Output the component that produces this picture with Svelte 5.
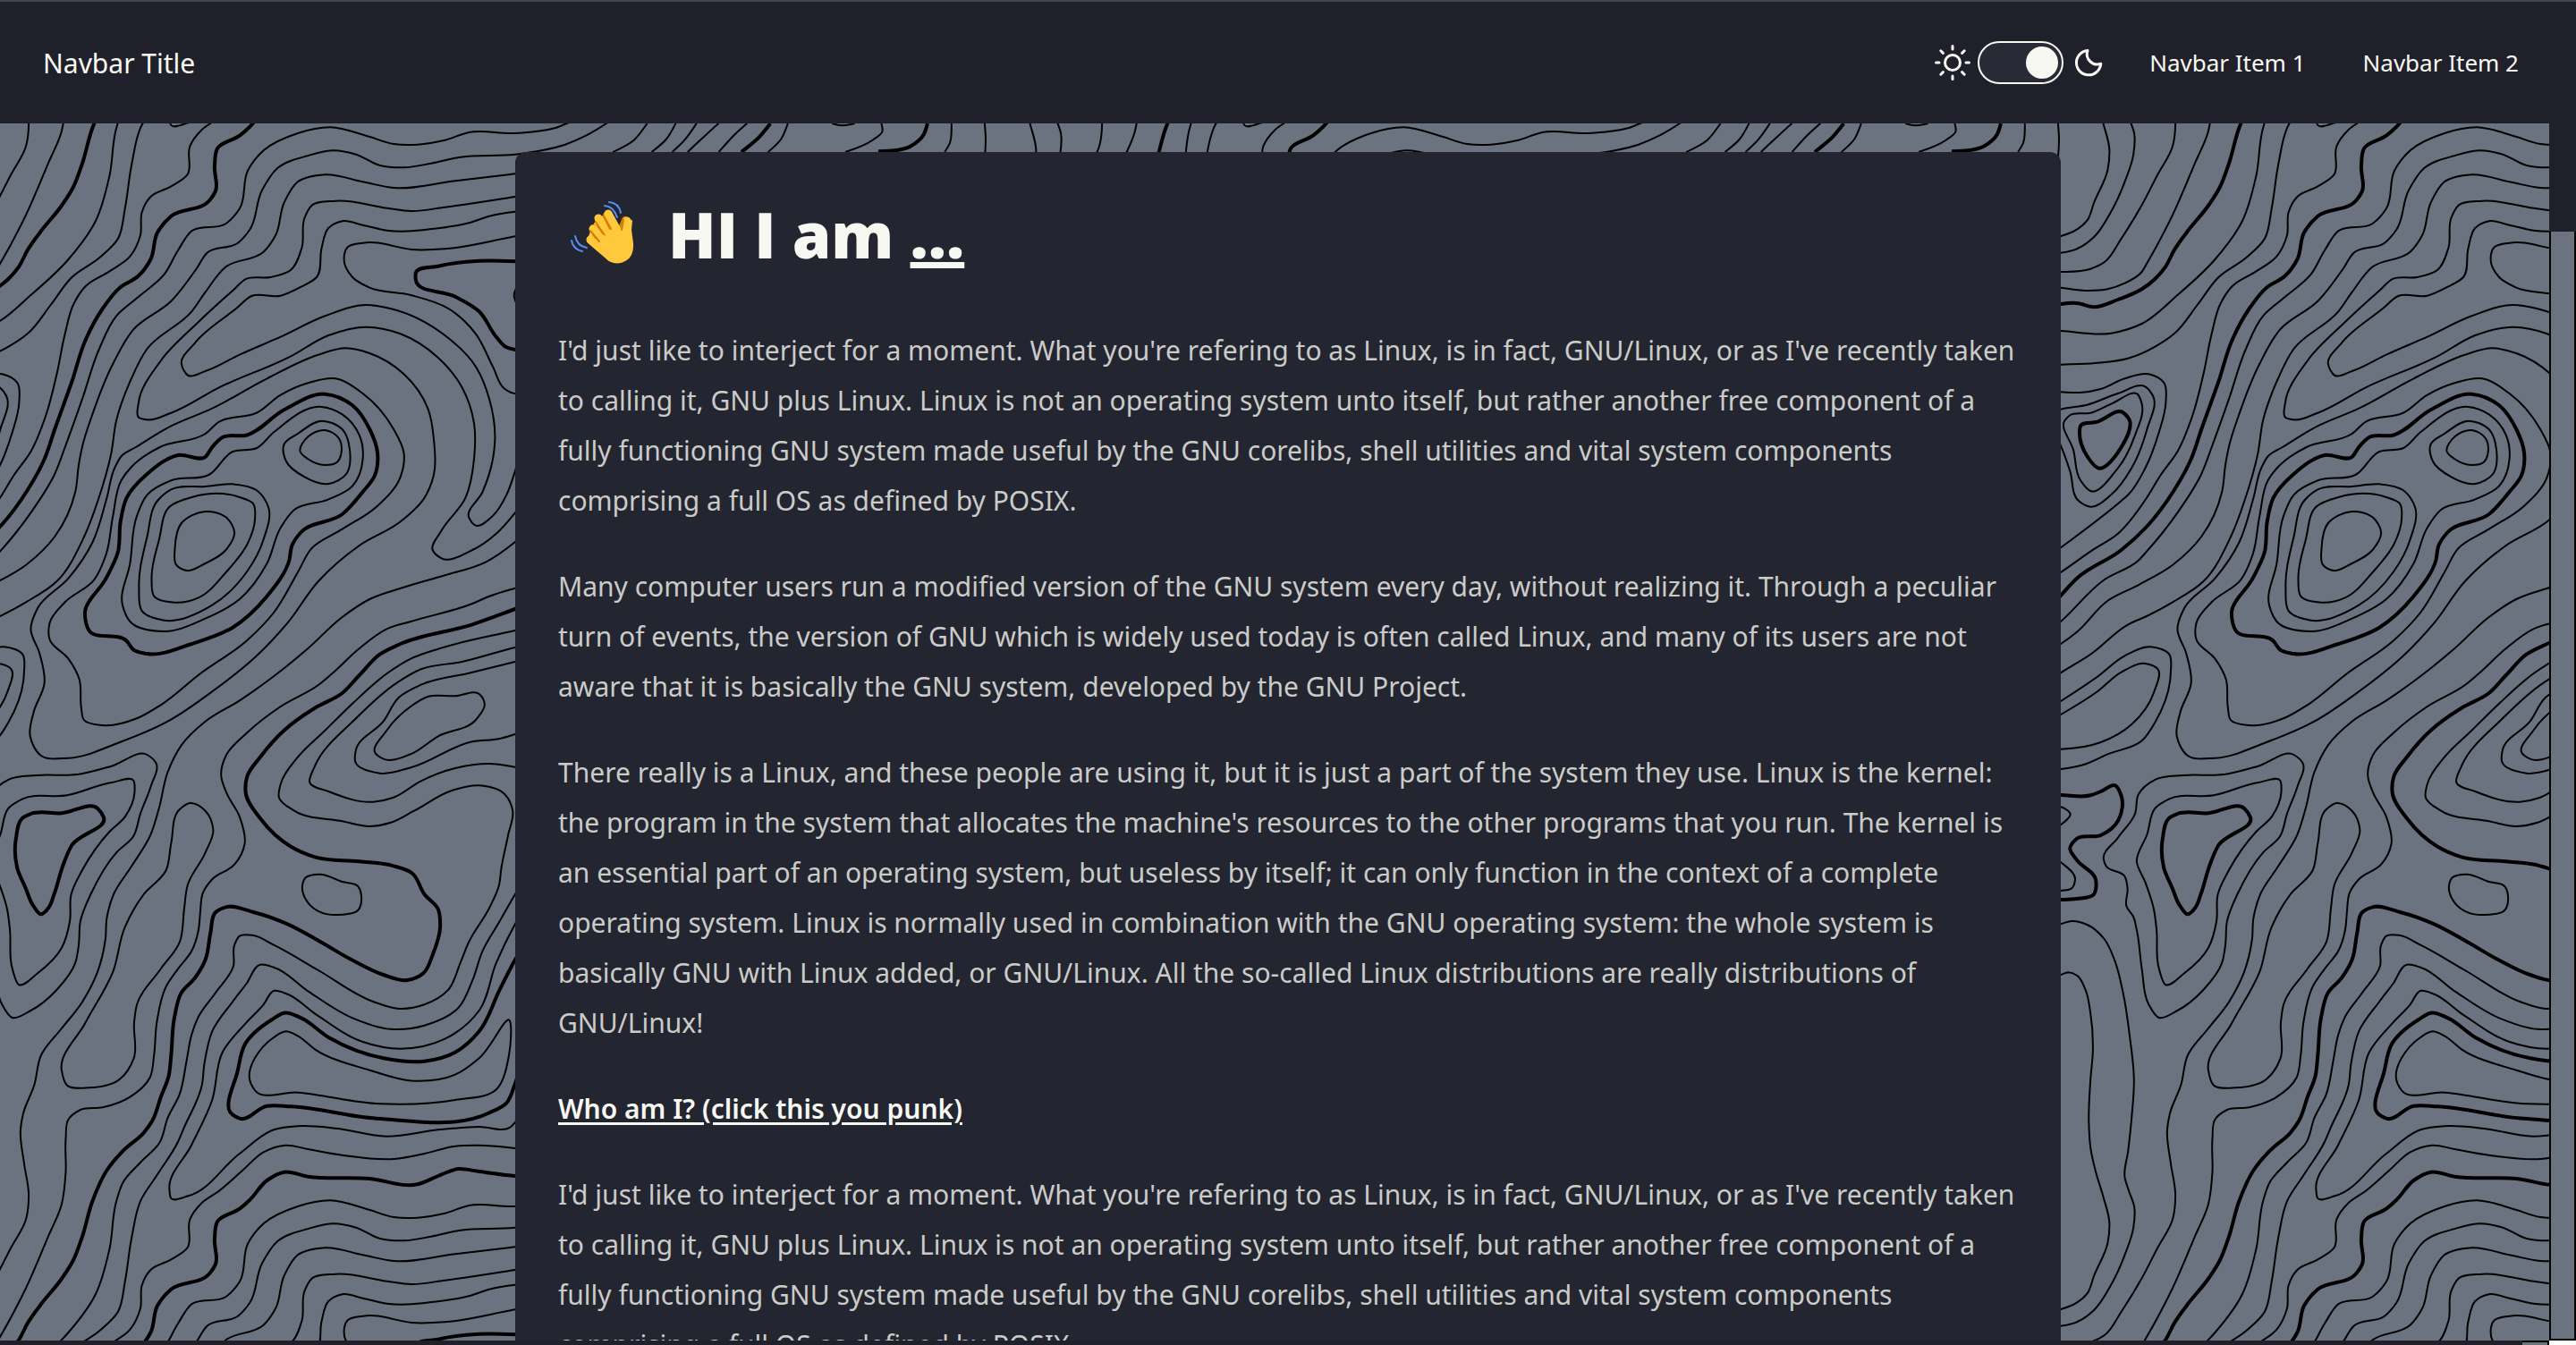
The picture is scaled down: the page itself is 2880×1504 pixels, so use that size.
<script>
  let dark = $state(true);

  const intro =
    "I'd just like to interject for a moment. What you're refering to as Linux, is in fact, GNU/Linux, or as I've recently taken to calling it, GNU plus Linux. Linux is not an operating system unto itself, but rather another free component of a fully functioning GNU system made useful by the GNU corelibs, shell utilities and vital system components comprising a full OS as defined by POSIX.";
  const users =
    'Many computer users run a modified version of the GNU system every day, without realizing it. Through a peculiar turn of events, the version of GNU which is widely used today is often called Linux, and many of its users are not aware that it is basically the GNU system, developed by the GNU Project.';
  const kernel =
    "There really is a Linux, and these people are using it, but it is just a part of the system they use. Linux is the kernel: the program in the system that allocates the machine's resources to the other programs that you run. The kernel is an essential part of an operating system, but useless by itself; it can only function in the context of a complete operating system. Linux is normally used in combination with the GNU operating system: the whole system is basically GNU with Linux added, or GNU/Linux. All the so-called Linux distributions are really distributions of GNU/Linux!";

  // Survey points of the topographic pattern. The grid is finer than a pixel:
  // one step is GRID_X pixels across and GRID_Y pixels down.
  const GRID_X = 600 / 1568;
  const GRID_Y = 1 / 3;
  const TILE = 1200;
  const NAV = 138;

  const thinOpen = [
    '-260,400 -256,470 -259,530',
    '-300,3290 -251,3270 -229,3262 -204,3272 -179,3320 -164,3400 -157,3520 -164,3620 -169,3760 -164,3850 -149,3930 -127,4014 -109,4100 -114,4170 -154,4280 -174,4340 -204,4370 -251,4392 -320,4400',
    '-300,3125 -251,3100 -219,3090 -174,3102 -124,3150 -94,3220 -69,3330 -49,3480 -37,3620 -44,3750 -54,3860 -64,3950 -52,3995 -36,4050 -39,4120 -64,4210 -104,4310 -154,4395 -204,4435 -251,4448 -320,4450',
    '1560,1760 1505,1818 1420,1885 1300,1930 1180,1970 1080,2010 1000,2070 900,2175 810,2260 700,2350 600,2420 530,2500 490,2590 465,2710 440,2800 385,2905 332,3000 312,3080 308,3150 285,3260 240,3362 180,3450 120,3540 100,3640 68,3735 60,3790 70,3900 84,4010 76,4090 30,4190 -14,4288 -74,4400 -124,4480 -164,4502 -251,4512 -320,4510',
    '1560,1955 1505,1973 1430,2000 1380,2025 1200,2085 1130,2110 1050,2175 970,2260 930,2298 820,2370 720,2460 660,2535 646,2600 662,2660 700,2740 715,2830 685,2900 620,2950 593,2995 585,3060 580,3120 560,3190 520,3250 485,3310 458,3430 450,3540 438,3615 380,3680 300,3715 235,3723 200,3755 192,3820 192,3930 180,4040 140,4150 72,4330 0,4485 -14,4512 -64,4550 -114,4570 -169,4575 -251,4565 -320,4555',
    '1560,2100 1505,2115 1280,2177 1200,2210 1130,2260 1030,2360 950,2450 870,2540 820,2630 815,2675 860,2720 1000,2755 1080,2772 1140,2760 1210,2720 1320,2652 1400,2635 1475,2665 1498,2720 1485,2800 1465,2910 1458,2970 1430,3045 1370,3160 1345,3230 1310,3320 1240,3370 1160,3383 1090,3360 930,3255 800,3170 740,3138 700,3140 685,3170 682,3240 630,3330 580,3410 560,3470 545,3560 525,3670 490,3750 467,3832 410,3900 360,3965 340,4030 320,4190 280,4340 200,4470 90,4590 -14,4686 -104,4718 -251,4710 -320,4705',
    '1560,2900 1505,3000 1460,3090 1410,3190 1380,3290 1340,3380 1240,3440 1140,3452 1030,3415 900,3325 800,3245 760,3236 720,3300 680,3360 620,3460 597,3570 590,3640 535,3790 520,3830 460,3940 410,4030 385,4150 365,4300 345,4400 290,4465 210,4530 150,4620 80,4720 26,4762 -54,4802 -150,4818 -251,4823 -320,4825',
    '1560,3860 1505,3852 1400,3842 1330,3845 1240,3870 1150,3888 1000,3875 900,3855 835,3842 770,3865 710,3925 640,3995 590,4035 555,4090 548,4185 500,4225 440,4260 415,4310 410,4390 380,4460 320,4510 250,4560 215,4620 190,4720 165,4860 135,4990 90,5115 40,5195 0,5270 -84,5390 -164,5450 -251,5520 -320,5570',
    '1700,395 1656,414 1625,428 1560,442 1500,447 1370,444 1300,470 1220,485 1150,483 1070,455 965,427 870,447 770,505 725,570 700,700 660,750 560,775 520,840 480,920 400,1000 340,1060 290,1170 240,1340 190,1500 160,1590 90,1720 0,1850 -24,1880 -124,1945 -251,2085 -320,2150',
    '1820,375 1772,414 1712,455 1651,485 1582,505 1505,518 1340,528 1260,548 1180,562 1110,555 1040,518 975,505 900,522 810,565 765,640 730,770 695,815 605,848 575,900 500,1010 390,1105 330,1220 270,1390 240,1500 230,1560 220,1650 160,1800 76,1895 -20,1960 -114,2015 -204,2120 -251,2160 -310,2200',
    '1891,414 1852,470 1791,510',
    '1974,414 1948,465 1904,510',
    '2035,414 2000,470 1964,510',
    '2100,414 2060,455 2009,510',
    '2183,414 2148,450 2100,510',
    '2302,414 2283,465 2244,510',
    '2431,414 2462,421 2497,414',
    '2575,414 2578,440 2549,470 2470,510',
    '2780,414 2775,480 2760,510',
    '1560,575 1505,583 1330,607 1150,630 1060,610 950,586 870,610 830,680 805,790 770,845 660,895 600,980 560,1045 430,1170 380,1280 340,1410 325,1520 286,1680 246,1800 166,1950 76,2020 0,2067 -54,2095 -164,2195 -251,2257 -320,2310',
    '1560,650 1505,660 1300,695 1200,708 1130,698 980,674 910,690 890,730 882,830 850,905 790,930 720,935 680,975 580,1080 470,1210 405,1350 405,1400 430,1408 500,1385 640,1300 850,1195 960,1125 1070,1097 1170,1120 1280,1200 1350,1300 1385,1420 1385,1540 1360,1670 1290,1780 1264,1845 1290,1873 1380,1845 1450,1790 1505,1720 1560,1630',
    '1560,705 1505,710 1430,725 1370,748 1280,766 1130,773 1060,755 1000,742 960,765 940,830 925,930 880,962 820,992 735,993 690,1035 570,1150 530,1220 550,1260 600,1245 700,1190 820,1130 950,1060 1070,1023 1140,1035 1300,1125 1390,1230 1430,1340 1446,1480 1440,1540 1410,1650 1370,1735 1390,1763 1440,1730 1480,1660 1505,1580 1520,1520',
    '1560,782 1505,793 1300,835 1215,838 1060,815 1015,830 1005,870 1030,930 1080,965 1200,990 1310,1035 1390,1120 1440,1230 1475,1305 1505,1320 1530,1310',
    '1512,958 1502,990 1512,1025',
    '-320,1312 -251,1315 -194,1317 -134,1305 -64,1270 6,1255 51,1285 56,1350 36,1450 -4,1570 -54,1660 -74,1680 -251,1837 -320,1895',
    '-290,1388 -251,1373 -174,1358 -84,1320 -4,1297 19,1330 1,1440 -44,1570 -104,1660 -164,1700 -199,1680 -224,1580 -251,1495 -290,1400',
    '-320,2400 -251,2352 -144,2270 -64,2200 11,2170 66,2195 70,2260 26,2420 -14,2485 -114,2530 -184,2565 -251,2580 -320,2585',
    '-320,2440 -251,2397 -144,2320 -74,2255 -4,2226 33,2245 22,2320 -44,2430 -134,2490 -251,2513 -320,2510',
    '-270,2705 -251,2707 -223,2730 -251,2767 -280,2785',
    '-290,2860 -251,2892 -209,2950 -219,2980 -251,2988 -300,2995',
    '1560,2158 1505,2172 1350,2220 1230,2245 1160,2290 1040,2410 920,2570 905,2625 960,2655 1090,2690 1150,2675 1230,2620 1330,2577 1430,2562 1505,2573 1560,2585',
    '1560,2205 1505,2220 1370,2258 1230,2297 1165,2340 1120,2420 1040,2515 1038,2555 1110,2594 1200,2575 1380,2488 1460,2478 1505,2463 1560,2440',
    '1540,3030 1505,3100 1450,3230 1400,3390 1300,3485 1170,3518 1060,3495 920,3400 840,3335 800,3324 770,3370 720,3430 650,3530 620,3690 560,3840 495,3990 500,4020 550,4012 700,3870 800,3790 870,3778 980,3785 1130,3812 1280,3790 1400,3780 1490,3782 1515,3750'
  ];

  const thinClosed = [
    '397,1500 490,1435 620,1370 780,1270 930,1190 1010,1168 1080,1185 1180,1255 1250,1370 1268,1480 1266,1600 1240,1670 1170,1750 1050,1830 930,1950 840,2090 750,2200 620,2320 490,2420 350,2490 200,2543 120,2535 88,2470 98,2390 130,2290 115,2190 90,2110 110,2040 200,1940 270,1820 312,1670 335,1570 355,1530',
    '467,1500 600,1455 640,1415 750,1385 820,1325 900,1285 980,1270 1060,1320 1150,1440 1180,1520 1170,1600 1100,1700 1000,1775 910,1840 870,1920 800,2055 720,2150 585,2260 470,2365 400,2410 300,2433 245,2415 237,2370 232,2280 200,2210 145,2145 145,2090 190,2020 275,1945 310,1860 330,1730 355,1610 385,1565',
    '800,1450 940,1365 1000,1390 1050,1460 1060,1540 1030,1630 960,1675 860,1710 820,1770 780,1890 700,2010 600,2075 480,2118 380,2085 358,2030 380,1890 400,1730 430,1660 500,1612 610,1593 680,1515 750,1503',
    '830,1490 870,1455 940,1412 1000,1440 1022,1510 1012,1590 960,1623 890,1600 835,1545',
    '950,1443 990,1470 998,1510 985,1550 950,1560 900,1540 877,1515 900,1465',
    '500,1642 600,1632 680,1624 750,1645 785,1705 770,1810 720,1920 620,2030 480,2081 415,2050 406,1970 430,1800 460,1680',
    '560,1668 700,1668 740,1690 745,1740 725,1820 660,1920 580,2005 510,2021 450,2000 443,1940 465,1810 495,1700',
    '600,1716 660,1735 685,1785 660,1845 600,1890 545,1914 515,1895 511,1840 530,1755',
    '-239,1410 -224,1393 -164,1385 -104,1355 -26,1323 -14,1355 -34,1460 -84,1570 -164,1647 -194,1610 -214,1510',
    '456,2560 430,2532 326,2570 226,2598 106,2601 26,2615 -24,2665 -34,2730 -84,2810 -126,2880 -119,2905 -64,2940 -56,2980 -59,3040 -39,3075 -29,3120 -14,3250 6,3370 36,3414 90,3390 166,3320 220,3230 230,3170 235,3090 265,3000 340,2860 390,2805 410,2730 440,2640',
    '390,2618 326,2625 196,2668 66,2680 26,2710 1,2800 -29,2890 -4,2960 21,3050 29,3120 36,3250 56,3304 110,3265 180,3180 204,3090 208,3000 240,2920 320,2790 365,2740 393,2660',
    '555,2694 600,2720 623,2785 600,2860 548,2970 538,3050 525,3160 470,3250 400,3370 392,3430 391,3550 350,3620 260,3649 195,3640 180,3590 250,3430 330,3260 365,3110 420,3000 485,2920 500,2830 525,2715',
    '892,2945 935,2933 1000,2958 1045,2972 1056,3010 1045,3055 1000,3068 940,3062 895,3020 883,2975',
    '1250,2337 1330,2335 1400,2328 1416,2360 1390,2415 1280,2470 1200,2530 1120,2546 1096,2525 1130,2450 1200,2370',
    '1488,3422 1487,3540 1450,3655 1330,3690 1110,3703 870,3665 745,3658 733,3635 800,3480 835,3460 870,3475 920,3520 1080,3590 1210,3626 1330,3605 1400,3550'
  ];

  const thickOpen = [
    '1560,2020 1505,2043 1380,2095 1170,2160 1110,2195 1050,2265 1000,2325 920,2375 830,2450 760,2540 722,2605 718,2660 760,2745 850,2840 920,2875 1050,2890 1150,2905 1205,2930 1240,3000 1280,3050 1286,3110 1265,3200 1237,3265 1190,3288 1120,3270 1020,3215 930,3155 840,3100 740,3060 660,3043 630,3060 615,3130 600,3220 570,3280 530,3330 510,3410 500,3540 493,3610 470,3680 445,3760 420,3800 360,3860 310,3930 270,4030 240,4150 213,4230 180,4290 120,4375 80,4440 55,4495 25,4535 -14,4570 -84,4605 -154,4630 -204,4617 -251,4620 -320,4640',
    '1560,3945 1505,3945 1400,3930 1335,3922 1280,3945 1220,3973 1080,3954 900,3947 830,3932 780,3960 730,4025 700,4055 635,4098 627,4160 630,4240 610,4275 500,4325 460,4380 440,4470 405,4525 350,4565 300,4635 250,4740 210,4880 160,5040 130,5140 80,5245 0,5367 -74,5445 -204,5540 -251,5598 -310,5680',
    '2251,414 2218,460 2166,510',
    '2710,414 2697,455 2662,490 2566,508',
    '1560,882 1505,877 1400,875 1280,893 1215,915 1215,940 1330,995 1400,1045 1450,1130 1480,1165 1505,1173 1540,1180',
    '-320,2665 -251,2667 -164,2668 -134,2655 -92,2635 -74,2670 -82,2750 -134,2802 -204,2813 -224,2845 -204,2885 -149,2950 -154,3000 -204,3015 -251,3018 -320,3018',
    '1560,3120 1505,3220 1460,3320 1400,3460 1330,3530 1240,3560 1120,3550 960,3480 880,3415 830,3398 795,3420 715,3505 695,3590 680,3740 700,3752 780,3710 850,3712 1100,3752 1430,3733 1480,3700 1505,3635 1525,3560'
  ];

  const thickClosed = [
    '620,1500 650,1467 720,1460 830,1375 950,1322 1030,1360 1080,1440 1103,1520 1095,1595 1060,1650 1000,1725 880,1785 853,1830 845,1880 780,2000 680,2105 560,2160 430,2193 390,2180 370,2150 260,2115 248,2060 310,1940 345,1850 352,1750 370,1670 430,1590 520,1527 600,1533',
    '-194,1430 -144,1415 -70,1383 -52,1405 -74,1500 -142,1570 -174,1530 -196,1450',
    '90,2730 180,2728 285,2712 303,2742 210,2835 185,2900 158,3000 142,3045 120,3067 98,3040 75,2980 50,2910 47,2810 65,2745'
  ];

  // Smooth curve through the points; tangent lengths follow each segment's own length.
  function contour(text, closed) {
    const p = text.split(' ').map((pair) => {
      const [u, v] = pair.split(',').map(Number);
      return [u * GRID_X, v * GRID_Y - NAV];
    });
    const n = p.length;
    const at = (i) => (closed ? p[(i + n) % n] : p[Math.max(0, Math.min(n - 1, i))]);
    const gap = (a, b) => Math.hypot(b[0] - a[0], b[1] - a[1]) || 1;
    const tangent = (i) => {
      const a = at(i - 1);
      const b = at(i);
      const c = at(i + 1);
      const d1 = gap(a, b);
      const d2 = gap(b, c);
      return [0, 1].map(
        (k) => (((b[k] - a[k]) / d1) * d2 + ((c[k] - b[k]) / d2) * d1) / (d1 + d2)
      );
    };
    let d = `M${p[0][0].toFixed(1)} ${p[0][1].toFixed(1)}`;
    for (let i = 0; i < (closed ? n : n - 1); i++) {
      const a = at(i);
      const b = at(i + 1);
      const len = gap(a, b) / 3;
      const ta = tangent(i);
      const tb = tangent(i + 1);
      const nums = [a[0] + ta[0] * len, a[1] + ta[1] * len, b[0] - tb[0] * len, b[1] - tb[1] * len, b[0], b[1]];
      d += 'C' + nums.map((x) => x.toFixed(1)).join(' ');
    }
    return closed ? d + 'Z' : d;
  }

  const thin = [...thinOpen.map((t) => contour(t, false)), ...thinClosed.map((t) => contour(t, true))].join('');
  const thick = [...thickOpen.map((t) => contour(t, false)), ...thickClosed.map((t) => contour(t, true))].join('');
  const tiles = [0, 1, 2].flatMap((c) => [-1, 0, 1].map((r) => ({ x: c * TILE, y: r * TILE })));
</script>

<div class="page">
  <header class="navbar">
    <a class="title" href="#home">Navbar Title</a>
    <nav>
      <div class="theme">
        <svg class="icon" viewBox="-20 -20 40 40" aria-hidden="true">
          <circle r="8.5" />
          <path d="M0-18.5V-15M0 18.5V15M-18.5 0H-15M18.5 0H15" />
          <path d="M-13.2-13.2l2.6 2.6M13.2-13.2l-2.6 2.6M-13.2 13.2l2.6-2.6M13.2 13.2l-2.6-2.6" />
        </svg>
        <input type="checkbox" role="switch" aria-label="Dark theme" bind:checked={dark} />
        <svg class="icon" viewBox="-20 -20 40 40" aria-hidden="true">
          <path d="M-1-13.5A13.7 13.7 0 1 0 13.8 1.2A11.5 11.5 0 0 1-1-13.5Z" />
        </svg>
      </div>
      <a href="#item-1">Navbar Item 1</a>
      <a href="#item-2">Navbar Item 2</a>
    </nav>
  </header>

  <main>
    <svg class="topography" aria-hidden="true">
      <defs>
        <g id="contours">
          <path class="thin" d={thin} />
          <path class="thick" d={thick} />
        </g>
      </defs>
      {#each tiles as tile}
        <use href="#contours" x={tile.x} y={tile.y} />
      {/each}
    </svg>

    <article>
      <h1>
        <svg class="wave" viewBox="0 0 120 100" aria-hidden="true">
          <path class="motion" d="M47 18q10 1 14 13M52 14q11 1 13 12M14 52q2 11 13 13M10 57q2 10 12 12" />
          <path class="palm" d="M28 58L52 79Q62 84 70 79Q79 74 78 60L76 45L77 35L67 45L60 40L51 28L39 33L33 44Z" />
          <path class="shade" d="M49 29L53 42M40 32L45 48M34 43L41 57M70 34L66 44" />
          <path class="finger" d="M51 27L62 47M40 32L56 54M34 44L50 62M31 56L45 68M72 35L70 56" />
          <path class="crease" d="M46 30L53 44M37 36L45 49M31 46L41 58M68 34L66 45" />
        </svg>
        <span>HI I am <u>...</u></span>
      </h1>
      <p>{intro}</p>
      <p>{users}</p>
      <p>{kernel}</p>
      <p><a href="#who">Who am I? (click this you punk)</a></p>
      <p>{intro}</p>
    </article>
  </main>

  <div class="track-y" aria-hidden="true"><div class="thumb-y"></div></div>
  <div class="track-x" aria-hidden="true"><div class="thumb-x"></div><div class="corner"></div></div>
</div>

<style>
  :global(body) {
    background: #20202a;
  }
  .page {
    position: relative;
    display: flex;
    flex-direction: column;
    height: 100vh;
    overflow: hidden;
    color: #f8f8f2;
    font-family: 'Noto Sans', 'Open Sans', sans-serif;
    font-size: 30px;
  }
  a {
    color: inherit;
  }
  .navbar {
    flex: none;
    display: flex;
    align-items: center;
    justify-content: space-between;
    box-sizing: border-box;
    height: 138px;
    padding: 0 64px 0 48px;
    border-top: 2px solid #454545;
    background: #20202a;
  }
  .navbar a {
    text-decoration: none;
  }
  nav {
    display: flex;
    align-items: center;
    gap: 64px;
    font-size: 26px;
  }
  .theme {
    display: flex;
    align-items: center;
    gap: 8px;
    margin-right: -16px;
  }
  .icon {
    width: 40px;
    height: 40px;
    fill: none;
    stroke: #f8f8f2;
    stroke-width: 3;
    stroke-linecap: round;
    stroke-linejoin: round;
  }
  input {
    appearance: none;
    display: flex;
    align-items: center;
    box-sizing: border-box;
    width: 96px;
    height: 48px;
    margin: 0;
    padding: 0 4px;
    border: 2px solid #f8f8f2;
    border-radius: 24px;
    background: #282a36;
  }
  input::before {
    content: '';
    width: 36px;
    height: 36px;
    border-radius: 50%;
    background: #f8f8f2;
  }
  input:checked {
    justify-content: flex-end;
  }
  main {
    position: relative;
    flex: 1;
    min-height: 0;
    overflow: hidden;
    background: #6b7280;
  }
  .topography {
    position: absolute;
    inset: 0;
    width: 100%;
    height: 100%;
  }
  .thin,
  .thick {
    fill: none;
    stroke: #000;
    stroke-width: 2;
  }
  .thick {
    stroke-width: 4;
  }
  article {
    position: relative;
    box-sizing: border-box;
    width: 60%;
    margin: 32px auto 0;
    padding: 46px 48px;
    border-radius: 12px;
    background: #232530;
    color: #cbcbc8;
    line-height: 56px;
  }
  h1 {
    display: flex;
    align-items: center;
    margin: 0 0 56px;
    color: #f8f8f2;
    font-family: 'Open Sans', sans-serif;
    font-size: 70px;
    font-weight: 800;
    line-height: 92px;
  }
  .wave {
    width: 120px;
    height: 100px;
    margin: -4px -2px -4px 5px;
  }
  .wave path {
    fill: none;
    stroke-linecap: round;
    stroke-linejoin: round;
  }
  .wave .motion {
    stroke: #5190f5;
    stroke-width: 2;
  }
  .wave .palm {
    fill: #ffc83d;
    stroke: #ffc83d;
    stroke-width: 2;
  }
  .finger {
    stroke: #ffc83d;
    stroke-width: 9;
  }
  .shade {
    stroke: #d67d00;
    stroke-width: 8;
  }
  .crease {
    stroke: #d67d00;
    stroke-width: 2;
  }
  u {
    text-decoration-thickness: 7px;
    text-underline-offset: 4px;
    text-decoration-skip-ink: none;
  }
  p {
    margin: 0 0 40px;
  }
  p a {
    color: #f8f8f2;
    font-weight: 600;
    text-decoration-thickness: 3px;
    text-underline-offset: 4px;
  }
  .track-y {
    position: absolute;
    top: 2px;
    right: 0;
    bottom: 5px;
    display: flex;
    width: 30px;
    background: #20202a;
  }
  .thumb-y {
    flex: 1;
    box-sizing: border-box;
    margin-top: 257px;
    border: 2px solid #000;
    border-top: 0;
    background: #6b7280;
  }
  .track-x {
    flex: none;
    display: flex;
    justify-content: flex-end;
    height: 5px;
    background: #20202a;
  }
  .thumb-x {
    box-sizing: border-box;
    width: 30px;
    border: solid #000;
    border-width: 2px 2px 0 0;
    background: #6b7280;
  }
  .corner {
    width: 30px;
    background: #fff;
  }
</style>
